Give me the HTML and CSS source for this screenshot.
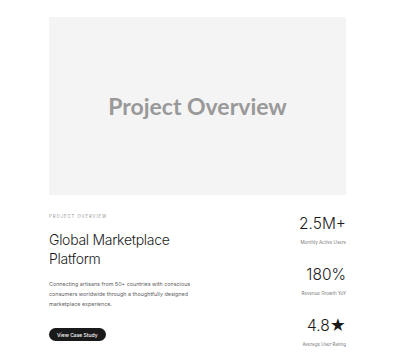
FILE: index.html
```html
<!DOCTYPE html>
<html>
<head>
<meta charset="utf-8">
<link rel="stylesheet" href="styles.css">
</head>
<body>
<main class="page">
  <div class="hero">
    <span class="hero-title">Project Overview</span>
  </div>
  <section class="info">
    <div class="intro">
      <p class="eyebrow">Project Overview</p>
      <h1 class="title">Global Marketplace Platform</h1>
      <p class="desc">Connecting artisans from 50+ countries with conscious consumers worldwide through a thoughtfully designed marketplace experience.</p>
      <a class="btn" href="#">View Case Study</a>
    </div>
    <div class="stats">
      <div class="stat">
        <div class="stat-num">2.5M+</div>
        <div class="stat-label">Monthly Active Users</div>
      </div>
      <div class="stat">
        <div class="stat-num">180%</div>
        <div class="stat-label">Revenue Growth YoY</div>
      </div>
      <div class="stat">
        <div class="stat-num">4.8★</div>
        <div class="stat-label">Average User Rating</div>
      </div>
    </div>
  </section>
</main>
</body>
</html>
```

FILE: styles.css
```css
html, body {
  margin: 0;
  padding: 0;
  background: #ffffff;
}

body {
  font-family: Inter, "Noto Sans", sans-serif;
  color: #1a1a1a;
}

.page {
  width: 297px;
  margin: 0 0 0 49px;
  padding-top: 17px;
}

.hero {
  height: 178px;
  background: #f4f4f4;
  display: flex;
  align-items: center;
  justify-content: center;
}

.hero-title {
  font-family: Lato, sans-serif;
  font-weight: 700;
  font-size: 23px;
  color: #999999;
}

.info {
  display: flex;
  justify-content: space-between;
  margin-top: 19px;
}

.intro {
  width: 160px;
}

.eyebrow {
  margin: 0;
  font-size: 4.4px;
  line-height: 6px;
  letter-spacing: 0.2em;
  text-transform: uppercase;
  color: #999999;
}

.title {
  margin: 10px 0 0;
  font-size: 14px;
  font-weight: 300;
  line-height: 19px;
  letter-spacing: -0.02em;
  color: #1a1a1a;
}

.desc {
  margin: 11px 0 0;
  font-size: 5.4px;
  line-height: 10px;
  color: #5f5f5f;
  max-width: 150px;
}

.btn {
  display: inline-flex;
  align-items: center;
  justify-content: center;
  margin-top: 19px;
  height: 13px;
  padding: 0 8px;
  background: #1a1a1a;
  color: #ffffff;
  border-radius: 8px;
  font-size: 5px;
  font-weight: 500;
  text-decoration: none;
}

.stats {
  display: flex;
  flex-direction: column;
  align-items: flex-end;
  gap: 19px;
}

.stat {
  text-align: right;
}

.stat-num {
  font-size: 15.5px;
  font-weight: 300;
  line-height: 20px;
  color: #1a1a1a;
}

.stat-label {
  margin-top: 6px;
  font-size: 4.5px;
  line-height: 6px;
  color: #777777;
}
```
